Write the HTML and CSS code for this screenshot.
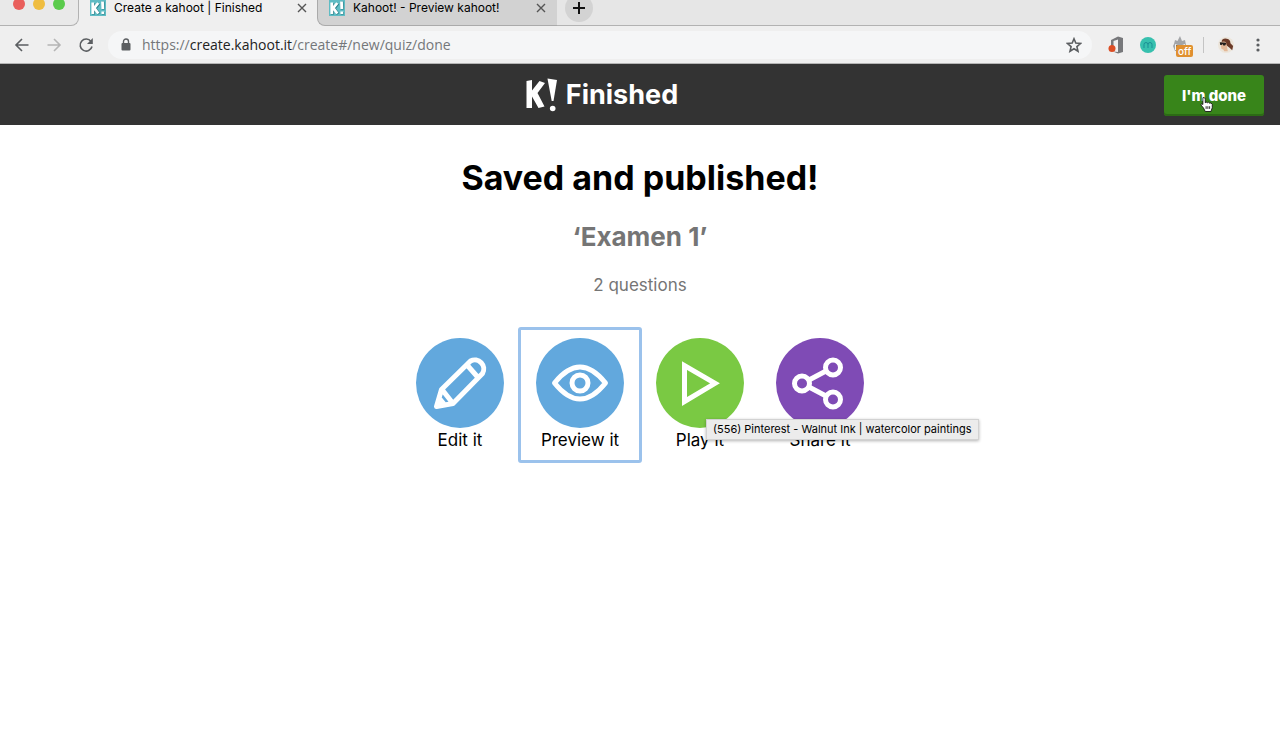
FILE: index.html
```html
<!DOCTYPE html>
<html lang="en">
<head>
  <meta charset="UTF-8" />
  <meta name="viewport" content="width=device-width, initial-scale=1.0"/>
  <title>Create a kahoot | Finished</title>
  <link rel="stylesheet" href="styles.css">
</head>
<body>
  <div class="browser">
    <div class="tab-strip">
      <div class="window-controls">
        <button class="dot red" aria-label="Close window"></button>
        <button class="dot yellow" aria-label="Minimize window"></button>
        <button class="dot green" aria-label="Zoom window"></button>
      </div>
      <div class="tab active">
        <svg class="favicon" viewBox="0 0 16 16" aria-hidden="true">
          <rect width="16" height="16" fill="#5fbcc4"/>
          <path d="M3.500 3v11.500M9 3.500L5 8.500l4 5.500M13 1.500l.3 8M13.300 12v2.500" fill="none" stroke="#277f88" stroke-width="3"/>
          <path d="M2.800 2.500V14M8.300 3L4.300 8l4 5.500M12.500 1.500l.3 7.500M12.800 11.500V14" fill="none" stroke="#fff" stroke-width="2.800"/>
        </svg>
        <a href="#" class="tab-title">Create a kahoot | Finished</a>
        <button class="tab-close" aria-label="Close tab">
          <svg viewBox="0 0 10 16"><path d="M1 4l8 8M9 4l-8 8"/></svg>
        </button>
      </div>
      <div class="tab">
        <svg class="favicon" viewBox="0 0 16 16" aria-hidden="true">
          <rect width="16" height="16" fill="#5fbcc4"/>
          <path d="M3.500 3v11.500M9 3.500L5 8.500l4 5.500M13 1.500l.3 8M13.300 12v2.500" fill="none" stroke="#277f88" stroke-width="3"/>
          <path d="M2.800 2.500V14M8.300 3L4.300 8l4 5.500M12.500 1.500l.3 7.500M12.800 11.500V14" fill="none" stroke="#fff" stroke-width="2.800"/>
        </svg>
        <a href="#" class="tab-title">Kahoot! - Preview kahoot!</a>
        <button class="tab-close" aria-label="Close tab">
          <svg viewBox="0 0 10 16"><path d="M1 4l8 8M9 4l-8 8"/></svg>
        </button>
      </div>
      <div class="strip-end">
        <button class="new-tab" aria-label="New tab">
          <svg viewBox="0 0 12 12"><path d="M6 0v12M0 6h12"/></svg>
        </button>
      </div>
    </div>

    <div class="toolbar">
      <div class="nav">
        <button class="icon-btn" aria-label="Back">
          <svg viewBox="0 0 16 16"><path d="M14.500 8H2M8 2L2 8l6 6"/></svg>
        </button>
        <button class="icon-btn" aria-label="Forward" disabled>
          <svg viewBox="0 0 16 16"><path d="M1.500 8H14M8 2l6 6-6 6"/></svg>
        </button>
        <button class="icon-btn" aria-label="Reload">
          <svg viewBox="0 0 16 16"><path d="M13 4.500A6 6 0 1 0 14 9.500"/><path class="solid" d="M14.800 1v6H9z"/></svg>
        </button>
      </div>
      <div class="address">
        <svg class="lock" viewBox="0 0 10 13" aria-hidden="true">
          <rect x="0.500" y="5" width="9" height="7.500" rx="1"/>
          <path d="M2.500 5.500V3.500a2.500 2.500 0 0 1 5 0v2"/>
        </svg>
        <div class="url">https://<span>create.kahoot.it</span>/create#/new/quiz/done</div>
        <button class="icon-btn" aria-label="Bookmark this page">
          <svg viewBox="0 0 16 16"><path d="M8 1.800l1.800 4.300 4.700.4-3.600 3.100 1.100 4.600L8 11.700l-4 2.500 1.100-4.600-3.600-3.100 4.700-.4z"/></svg>
        </button>
      </div>
      <div class="extensions">
        <button class="ext" aria-label="Office">
          <svg viewBox="0 0 16 18">
            <path d="M3 4l7-3.500 5 1.500v14l-5 1.500-5-2 5 .5V3.500L5.500 5v5H3z" fill="#77787b"/>
            <circle cx="4" cy="12.500" r="3.500" fill="#dc4e25"/>
          </svg>
        </button>
        <button class="ext" aria-label="Mercury">
          <svg viewBox="0 0 16 16">
            <circle cx="8" cy="8" r="8" fill="#37c0ae"/>
            <path d="M4 11V7.500a2 2 0 0 1 4 0V11M8 7.500a2 2 0 0 1 4 0V11" fill="none" stroke="#1b8f95" stroke-width="1"/>
          </svg>
        </button>
        <button class="ext" aria-label="Extension, off">
          <svg viewBox="0 0 16 18">
            <path d="M2 8L3 4l2.500 1L8 0l2 5 3-1 1 5 2 2-2 4H3L1 10z" fill="#a3a5a8"/>
            <path d="M3 8l4 1.500V14H3zM9 9.500L13 8v6H9z" fill="#f4f4f4"/>
            <path d="M5 9v2.500M11 9v2.500" stroke="#333" stroke-width="1.500"/>
          </svg>
          <span class="badge">off</span>
        </button>
        <span class="divider"></span>
        <button class="ext" aria-label="Profile">
          <svg viewBox="0 0 18 18">
            <circle cx="9" cy="9" r="9" fill="#ece5da"/>
            <path d="M4 5q1-4 6-3 4 1 4 5l3 3-1 5-3-3-4-3z" fill="#6b3a28"/>
            <path d="M3 6q4-2 6 0l1 4 1 6H7l-1-2-2-.5L3 9z" fill="#e3b898"/>
            <path d="M2 6l7 .5V8L8 9.500H6L5 8 4 9H2.500z" fill="#211e1d"/>
          </svg>
        </button>
        <button class="ext" aria-label="Menu">
          <svg viewBox="0 0 16 16" fill="#5b5e61"><circle cx="8" cy="3" r="1.600"/><circle cx="8" cy="8" r="1.600"/><circle cx="8" cy="13" r="1.600"/></svg>
        </button>
      </div>
    </div>
  </div>

  <header class="header">
    <h1 class="brand">
      <svg class="logo" viewBox="0 0 32 34" aria-label="K!">
        <path d="M.5 3l5.500-1v10.500l7.500-9.500 5.500 2L11.500 15l7 13.500-6 1.500L6 18.500V30H.5z"/>
        <path d="M21.500.5L31 2l-3.500 21h-1.800z"/>
        <circle cx="26.700" cy="30.500" r="2.800"/>
      </svg>
      Finished
    </h1>
    <button class="done">I'm done
      <svg class="cursor" viewBox="0 0 16 18" aria-hidden="true">
        <path d="M3.500 1C5 .5 6 2 6 3v4l1-.8 1.500.8 1.200-.6L11 7.500l1.500-.3 1.500 1.500v4L12.500 17H6L4 13 1 9.500c0-1.300 1.300-1.500 2.300-.5V3z"/>
        <path class="lines" d="M7 11v3M9 11v3M11 11v3"/>
      </svg>
    </button>
  </header>

  <main class="content">
    <h2 class="heading">Saved and published!</h2>
    <h3 class="quiz-name">‘Examen 1’</h3>
    <p class="count">2 questions</p>
    <div class="actions">
      <a class="action" href="#">
        <svg class="circle blue" viewBox="0 0 88 90" aria-hidden="true">
          <path d="M20.500 68.500l5-17L54.500 23a9 9 0 0 1 12 12.500L37 65.500zM26 51.500L37 65.500M51.500 27.500l11 12.500M23 60l5 6"/>
        </svg>
        <span>Edit it</span>
      </a>
      <a class="action focused" href="#">
        <svg class="circle blue" viewBox="0 0 88 90" aria-hidden="true">
          <path d="M18.500 45Q44 13 69.500 45Q44 77 18.500 45z"/>
          <circle cx="44" cy="45" r="8"/>
        </svg>
        <span>Preview it</span>
      </a>
      <a class="action" href="#">
        <svg class="circle lime" viewBox="0 0 88 90" aria-hidden="true">
          <path class="sharp" d="M28.500 27.500v36L59 45.300z"/>
        </svg>
        <span>Play it</span>
        <span class="tooltip" role="tooltip">(556) Pinterest - Walnut Ink | watercolor paintings</span>
      </a>
      <a class="action" href="#">
        <svg class="circle purple" viewBox="0 0 88 90" aria-hidden="true">
          <circle cx="26" cy="45.500" r="7.500"/>
          <circle cx="57" cy="29.500" r="7.500"/>
          <circle cx="57" cy="61.500" r="7.500"/>
          <path d="M33 42l17-9M33 49l17 9"/>
        </svg>
        <span>Share it</span>
      </a>
    </div>
  </main>
</body>
</html>
```
FILE: styles.css
```css
* {
  box-sizing: border-box;
}

body {
  margin: 0;
  background-color: #fff;
  color: #000;
  font-family: Inter, sans-serif;
}

button {
  border: none;
  padding: 0;
  background: none;
  font-family: inherit;
  cursor: pointer;
}

a {
  color: inherit;
  text-decoration: none;
}

svg {
  display: block;
}

/* browser window */
.browser {
  background-color: #efefef;
  border-bottom: 1px solid #b5b5b5;
}

.tab-strip {
  display: flex;
  height: 26px;
}

.window-controls {
  display: flex;
  gap: 8px;
  width: 79px;
  padding-left: 13px;
  background-color: #e9e9e9;
  border-right: 1px solid #b2b2b2;
  border-bottom: 1px solid #b2b2b2;
  border-bottom-right-radius: 8px;
}

.dot {
  width: 12px;
  height: 12px;
  margin-top: -2px;
  border-radius: 50%;
}

.red {
  background-color: #e95f5c;
}

.yellow {
  background-color: #efbd40;
}

.green {
  background-color: #5bcb4c;
}

.tab {
  display: flex;
  width: 240px;
  padding: 0 11px;
  background-color: #d2d2d2;
  border-left: 1px solid #aaa;
  border-bottom: 1px solid #aaa;
  border-bottom-left-radius: 8px;
}

.tab.active {
  width: 238px;
  padding: 0 10px 0 11px;
  background: none;
  border: none;
}

.favicon {
  width: 16px;
  height: 16px;
}

.tab-title {
  flex: 1;
  margin-left: 8px;
  font-size: 12px;
  line-height: 16px;
  white-space: nowrap;
}

.tab-close {
  width: 10px;
  height: 16px;
}

.tab-close path {
  stroke: #555;
  stroke-width: 1.4;
}

.strip-end {
  flex: 1;
  padding-left: 8px;
  background-color: #e6e6e6;
  border-bottom: 1px solid #b2b2b2;
}

.new-tab {
  display: flex;
  align-items: center;
  justify-content: center;
  width: 28px;
  height: 28px;
  margin-top: -6px;
  border-radius: 50%;
  background-color: #d3d3d3;
}

.new-tab svg {
  width: 12px;
}

.new-tab path {
  stroke: #111;
  stroke-width: 2;
}

.toolbar {
  display: flex;
  align-items: center;
  height: 37px;
  padding: 0 14px;
}

.nav {
  display: flex;
  gap: 16px;
}

.icon-btn {
  width: 16px;
  height: 16px;
}

.icon-btn path {
  fill: none;
  stroke: #5b5e61;
  stroke-width: 1.6;
}

.icon-btn .solid {
  fill: #5b5e61;
  stroke: none;
}

.icon-btn:disabled path {
  stroke: #b5b5b5;
}

.address {
  display: flex;
  flex: 1;
  align-items: center;
  height: 28px;
  margin: 0 16px 0 14px;
  padding: 0 10px 0 13px;
  border-radius: 14px;
  background-color: #f5f6f7;
}

.lock {
  width: 10px;
  height: 13px;
  fill: #5b5e61;
}

.lock path {
  fill: none;
  stroke: #5b5e61;
  stroke-width: 1.4;
}

.url {
  flex: 1;
  margin-left: 11px;
  color: #74777a;
  font: 14px/18px "Open Sans", sans-serif;
}

.url span {
  color: #222;
}

.extensions {
  display: flex;
  align-items: center;
  gap: 16px;
}

.ext {
  position: relative;
  width: 16px;
}

.badge {
  position: absolute;
  left: 4px;
  top: 9px;
  padding: 0 2px;
  border-radius: 2px;
  background-color: #e0902f;
  color: #fff;
  font-size: 10px;
  font-weight: 500;
  line-height: 12px;
}

.divider {
  width: 1px;
  height: 16px;
  margin: 0 -2px 0 -1px;
  background-color: #c4c4c4;
}

/* kahoot page */
.header {
  display: grid;
  grid-template-columns: 1fr auto 1fr;
  align-items: center;
  height: 61px;
  padding: 0 16px;
  background-color: #333;
}

.brand {
  display: flex;
  grid-column: 2;
  align-items: center;
  gap: 8px;
  margin: 0;
  padding-right: 76px;
  color: #fff;
  font-size: 27px;
  font-weight: 700;
  line-height: 32px;
}

.logo {
  width: 32px;
  height: 34px;
  fill: #fff;
}

.done {
  position: relative;
  justify-self: end;
  width: 100px;
  height: 41px;
  margin-top: 2px;
  border-radius: 3px;
  background-color: #38851a;
  box-shadow: inset 0 -2px #2c6b15;
  color: #fff;
  font-size: 15px;
  font-weight: 800;
}

.cursor {
  position: absolute;
  left: 36px;
  top: 21px;
  width: 14px;
  height: 17px;
  fill: #fff;
  stroke: #111;
}

.cursor .lines {
  fill: none;
}

.content {
  padding: 32px 16px;
  text-align: center;
}

.heading {
  margin: 0;
  font-size: 34px;
  font-weight: 700;
  line-height: 42px;
}

.quiz-name {
  margin: 22px 0 0;
  color: #757575;
  font-size: 26px;
  font-weight: 700;
  line-height: 32px;
}

.count {
  margin: 20px 0 0;
  color: #757575;
  font-size: 17px;
  line-height: 24px;
}

.actions {
  display: flex;
  justify-content: center;
  margin-top: 32px;
}

.action {
  position: relative;
  display: flex;
  flex-direction: column;
  align-items: center;
  width: 120px;
  height: 132px;
  padding-top: 9px;
  font-size: 17px;
  line-height: 24px;
}

.focused {
  border-radius: 1px;
  outline: 3px solid #9bc2ec;
  outline-offset: -1px;
}

.circle {
  width: 88px;
  height: 90px;
  border-radius: 50%;
  fill: none;
  stroke: #fff;
  stroke-width: 5;
  stroke-linejoin: round;
}

.circle .sharp {
  stroke-linejoin: miter;
}

.blue {
  background-color: #62a8dd;
}

.lime {
  background-color: #7ac943;
}

.purple {
  background-color: #7f4bb5;
}

.tooltip {
  position: absolute;
  z-index: 1;
  left: 66px;
  top: 90px;
  padding: 0 6px;
  border: 1px solid #d2d2d2;
  background-color: #ececec;
  box-shadow: 0 1px 3px rgba(0, 0, 0, 0.3);
  font-size: 11px;
  line-height: 19px;
  white-space: nowrap;
}
```
